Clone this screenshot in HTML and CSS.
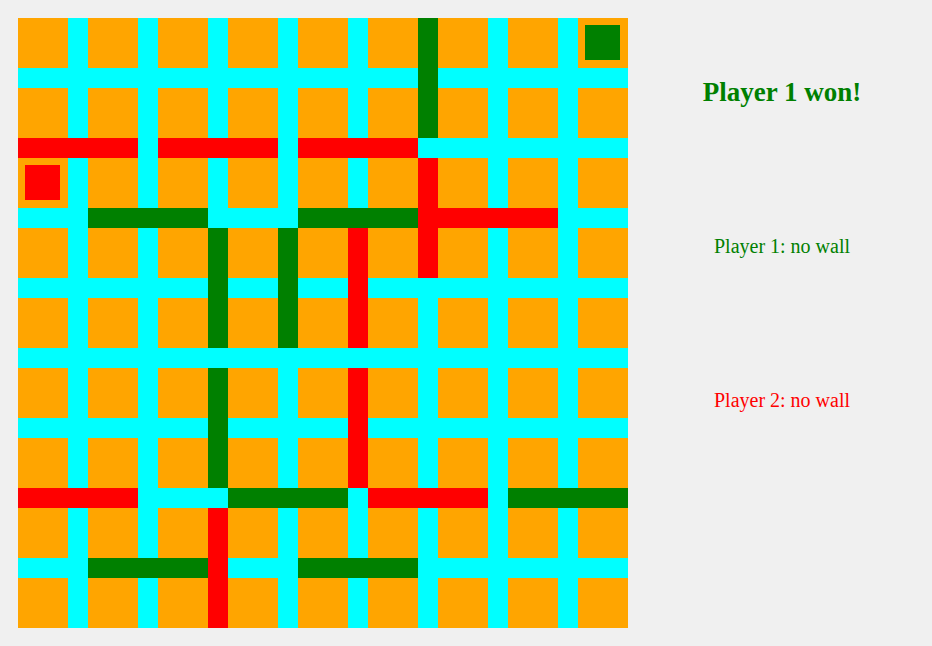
FILE: index.html
```html
<!DOCTYPE html>
<html lang="en">
<head>
<meta charset="utf-8">
<title>Quoridor</title>
<link rel="stylesheet" href="styles.css">
</head>
<body>
<main class="game">
  <div class="board" id="board" role="img" aria-label="Game board"></div>
  <aside class="status">
    <h1 class="result player-1">Player 1 won!</h1>
    <p class="walls-left player-1">Player 1: no wall</p>
    <p class="walls-left player-2">Player 2: no wall</p>
  </aside>
</main>
<script src="board.js"></script>
</body>
</html>
```
FILE: styles.css
```css
body {
  margin: 0;
  background: #f0f0f0;
  font-family: "Liberation Serif", "Times New Roman", serif;
}

.game {
  display: flex;
  gap: 4px;
  min-height: 100vh;
}

.board {
  display: grid;
  grid-template-columns: 50px repeat(8, 20px 50px);
  grid-template-rows: 50px repeat(8, 20px 50px);
  align-self: flex-start;
  flex: none;
  margin: 18px 0 18px 18px;
  background: cyan;
}

.cell {
  background: orange;
}

.pawn {
  margin: 7px 8px 8px 7px;
}

.green {
  background: green;
}

.red {
  background: red;
}

.status {
  flex: 1;
  display: grid;
  grid-template-rows: repeat(4, 1fr);
  place-items: center;
  padding: 15px 0;
}

.result,
.walls-left {
  margin: 0;
}

.result {
  font-size: 27px;
  line-height: 32px;
}

.walls-left {
  font-size: 20px;
  line-height: 24px;
}

.player-1 {
  color: green;
}

.player-2 {
  color: red;
}
```
FILE: board.js
```js
const SIZE = 9;
const board = document.getElementById("board");

// Cells sit on odd grid lines, the gaps between them on even ones.
function place(className, row, column, rowSpan, columnSpan) {
  const piece = document.createElement("div");
  piece.className = className;
  piece.style.gridArea = `${row} / ${column} / span ${rowSpan} / span ${columnSpan}`;
  board.append(piece);
}

for (let row = 0; row < SIZE; row++) {
  for (let column = 0; column < SIZE; column++) {
    place("cell", 2 * row + 1, 2 * column + 1, 1, 1);
  }
}

// [colour, row, column]: the wall runs below the cell, to the right.
const horizontalWalls = [
  ["red", 1, 0], ["red", 1, 2], ["red", 1, 4],
  ["green", 2, 1], ["green", 2, 4], ["red", 2, 6],
  ["red", 6, 0], ["green", 6, 3], ["red", 6, 5], ["green", 6, 7],
  ["green", 7, 1], ["green", 7, 4],
];

// [colour, row, column]: the wall runs right of the cell, downwards.
const verticalWalls = [
  ["green", 0, 5], ["red", 2, 5],
  ["green", 3, 2], ["green", 3, 3], ["red", 3, 4],
  ["green", 5, 2], ["red", 5, 4],
  ["red", 7, 2],
];

const pawns = [["green", 0, 8], ["red", 2, 0]];

for (const [colour, row, column] of horizontalWalls) {
  place(colour, 2 * row + 2, 2 * column + 1, 1, 3);
}
for (const [colour, row, column] of verticalWalls) {
  place(colour, 2 * row + 1, 2 * column + 2, 3, 1);
}
for (const [colour, row, column] of pawns) {
  place(`pawn ${colour}`, 2 * row + 1, 2 * column + 1, 1, 1);
}
```
